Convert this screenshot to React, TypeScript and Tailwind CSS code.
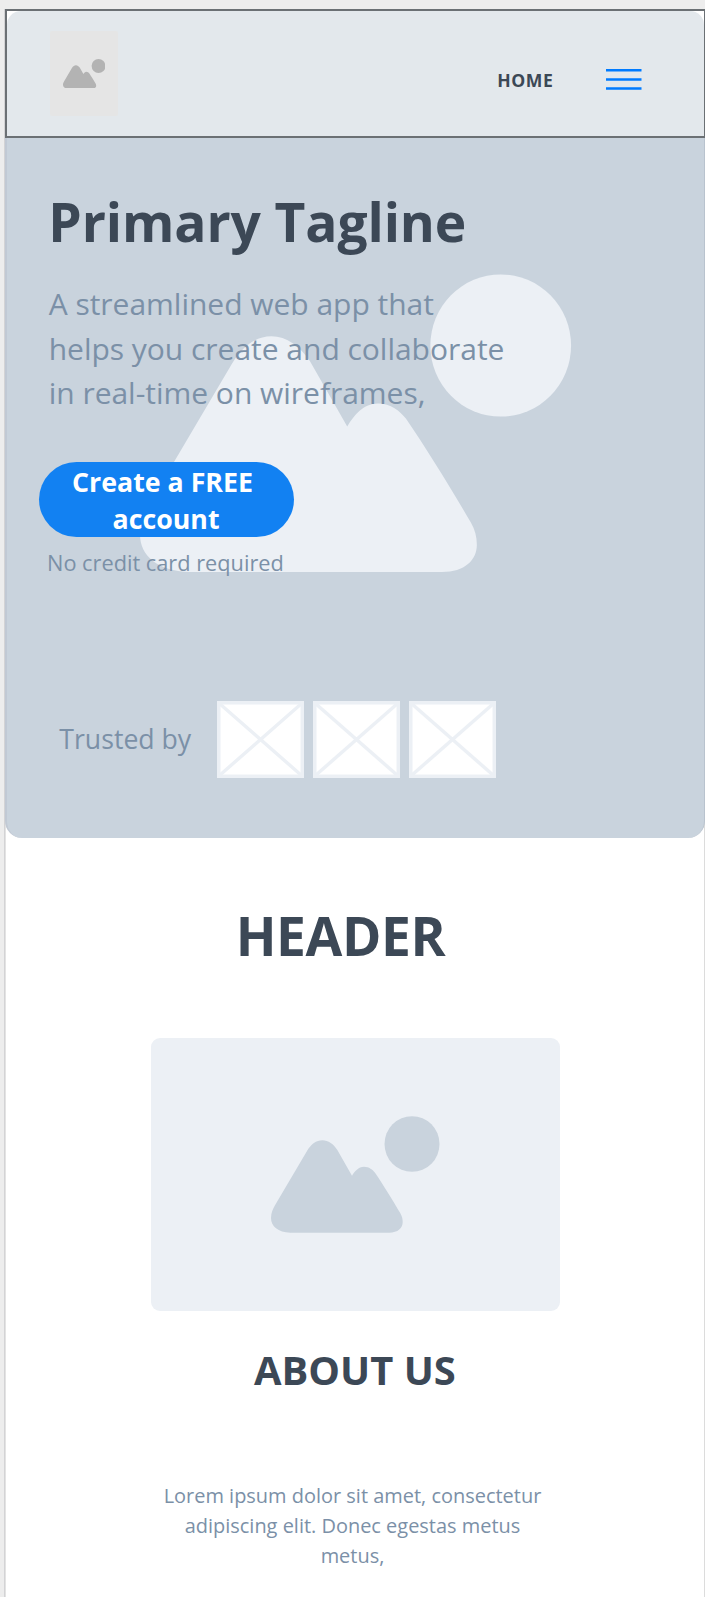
function Landscape({ className }: { className: string }) {
  return (
    <svg className={className} viewBox="64 79 506 350" preserveAspectRatio="none" fill="currentColor" aria-hidden="true">
      <path d="M64 385C64 370 70 358 76 347L172 184C184 164 200 152 218 152C236 152 252 164 263 181L307 258C315 245 326 231 343 231C358 231 369 240 376 249C400 284 430 333 452 371C457 380 459 388 459 397C459 415 445 429 418 429H122C85 428 64 410 64 385Z" />
      <ellipse cx="487" cy="163" rx="82.5" ry="83.5" />
    </svg>
  );
}

function LogoPlaceholder() {
  return (
    <svg className="h-[77px] w-[87px] text-[#ecf0f5]" viewBox="0 0 87 77" fill="none" stroke="currentColor" strokeWidth="3.4" aria-hidden="true">
      <rect x="1.75" y="1.75" width="83.5" height="73.5" fill="white" strokeWidth="3.5" />
      <path d="M3 3L84 74M84 3L3 74" />
    </svg>
  );
}

function Header() {
  return (
    <header className="h-[128.5px] border-2 border-r border-[#6b7074] bg-white">
      <div className="flex h-full items-start rounded-t-[14px] bg-[#e3e8ec] pl-[43px]">
        <div className="mt-5 flex h-[85px] w-[68px] items-center justify-center rounded-[2px] bg-[#e5e5e5] text-[#b3b3b3]">
          <Landscape className="h-[29.5px] w-[42.5px]" />
        </div>
        <nav className="mt-[56px] ml-auto flex items-center pr-[62.5px]">
          <a className="relative top-px text-[17.6px] leading-6 font-bold tracking-[0.6px] text-[#3c4856]">HOME</a>
          <svg className="ml-[52.5px] h-[21px] w-[35.5px]" viewBox="0 0 35.5 21" aria-label="Menu">
            <path d="M0 1.2H35.5M0 10.4H35.5M0 19.6H35.5" stroke="#007bff" strokeWidth="2.5" />
          </svg>
        </nav>
      </div>
    </header>
  );
}

function Hero() {
  return (
    <section className="relative h-[700px] rounded-b-[17px] border-r border-l-2 border-r-[#b9c3ce] border-l-[#c1c9d4] bg-[#c9d3dd] text-[#7b90a7]">
      <div className="absolute top-[136.4px] left-[133px] text-[#ecf0f5]">
        <Landscape className="h-[298px] w-[431.5px]" />
      </div>
      <div className="relative flex flex-col items-start pt-[48.8px]">
        <h1 className="ml-[41.3px] text-[53.35px] leading-[72px] font-bold tracking-[-0.1px] text-[#3c4856]">Primary Tagline</h1>
        <p className="mt-[24px] ml-[41.7px] text-[30px] leading-[44.6px] tracking-[-0.02px]">
          A streamlined web app that
          <br />
          helps you create and collaborate
          <br />
          in real-time on wireframes,
        </p>
        <button className="mt-[46px] ml-[31.5px] h-[75px] w-[255px] rounded-full bg-[#1281f2] pt-px text-[26.75px] leading-[37px] font-bold text-white">
          Create a FREE&nbsp;
          <br />
          account
        </button>
        <p className="mt-[10.5px] ml-[40px] text-[21.75px] leading-[30px]">No credit card required</p>
        <div className="mt-[123px] ml-[52.3px] flex items-center">
          <span className="w-[157.7px] text-[26.65px] leading-9">Trusted by</span>
          <div className="flex gap-[9.2px]">
            <LogoPlaceholder />
            <LogoPlaceholder />
            <LogoPlaceholder />
          </div>
        </div>
      </div>
    </section>
  );
}

function About() {
  return (
    <section className="flex flex-col pt-[62.9px] text-[#3c4856]">
      <h2 className="ml-[230.7px] text-[53.35px] leading-[72px] font-bold tracking-[-0.4px]">HEADER</h2>
      <div className="mt-[65.5px] ml-[146px] flex h-[273.5px] w-[409px] rounded-[9px] bg-[#ecf0f5] text-[#c9d3dd]">
        <Landscape className="mt-[78.3px] ml-[120.2px] h-[116.7px] w-[168.7px]" />
      </div>
      <h2 className="mt-[31.2px] ml-[249px] text-[39.9px] leading-[54px] font-bold">ABOUT US</h2>
      <p className="mt-[84.6px] ml-[137.5px] w-[420px] text-center text-[19.97px] leading-[30px] text-[#7b90a7]">
        Lorem ipsum dolor sit amet, consectetur
        <br />
        adipiscing elit. Donec egestas metus
        <br />
        metus,
      </p>
    </section>
  );
}

export default function App() {
  return (
    <div className="h-[1597px] w-[705px] overflow-hidden bg-[#ededed] pt-[9px] pl-1 font-['Open_Sans',sans-serif]">
      <main className="h-full border-l border-[#d3d3d5] bg-white shadow-[inset_1px_0_#e3e3e3,inset_-1px_0_#dcdcdc]">
        <Header />
        <Hero />
        <About />
      </main>
    </div>
  );
}
